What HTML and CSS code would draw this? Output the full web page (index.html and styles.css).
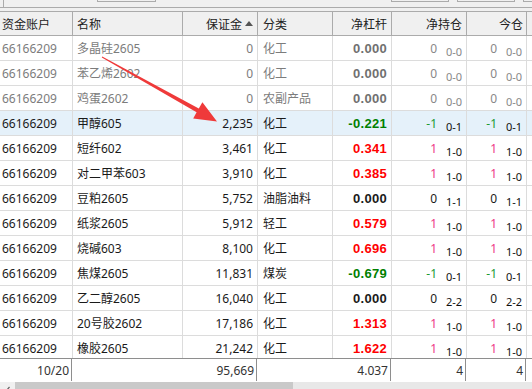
FILE: index.html
```html
<!DOCTYPE html>
<html>
<head>
<meta charset="utf-8">
<link rel="stylesheet" href="styles.css">
</head>
<body>
<div class="app">
  <div class="toolbar">
    <span class="tick"></span>
    <span class="tb b1"></span>
    <span class="tb b2"></span>
    <span class="tb b3"></span>
    <span class="tb b4"></span>
  </div>

  <div class="grid head">
    <div class="c first">资金账户</div>
    <div class="c">名称</div>
    <div class="c r">保证金<svg class="sort" width="8" height="5" viewBox="0 0 8 5"><path d="M0 5 L4 0 L8 5 Z" fill="#555"/></svg></div>
    <div class="c cat">分类</div>
    <div class="c r">净杠杆</div>
    <div class="c r">净持仓</div>
    <div class="c r last3">今仓</div>
    <div class="c end"></div>
  </div>

  <div class="rows">
    <div class="grid row dim">
      <div class="c first">66166209</div><div class="c">多晶硅2605</div><div class="c r">0</div><div class="c cat">化工</div>
      <div class="c r lev">0.000</div>
      <div class="c p"><span class="n">0</span><span class="s">0-0</span></div>
      <div class="c p"><span class="n">0</span><span class="s">0-0</span></div><div class="c end"></div>
    </div>
    <div class="grid row dim">
      <div class="c first">66166209</div><div class="c">苯乙烯2602</div><div class="c r">0</div><div class="c cat">化工</div>
      <div class="c r lev">0.000</div>
      <div class="c p"><span class="n">0</span><span class="s">0-0</span></div>
      <div class="c p"><span class="n">0</span><span class="s">0-0</span></div><div class="c end"></div>
    </div>
    <div class="grid row dim">
      <div class="c first">66166209</div><div class="c">鸡蛋2602</div><div class="c r">0</div><div class="c cat">农副产品</div>
      <div class="c r lev">0.000</div>
      <div class="c p"><span class="n">0</span><span class="s">0-0</span></div>
      <div class="c p"><span class="n">0</span><span class="s">0-0</span></div><div class="c end"></div>
    </div>
    <div class="grid row sel">
      <div class="c first">66166209</div><div class="c">甲醇605</div><div class="c r">2,235</div><div class="c cat">化工</div>
      <div class="c r lev dn">-0.221</div>
      <div class="c p"><span class="n dn1">-1</span><span class="s">0-1</span></div>
      <div class="c p"><span class="n dn1">-1</span><span class="s">0-1</span></div><div class="c end"></div>
    </div>
    <div class="grid row">
      <div class="c first">66166209</div><div class="c">短纤602</div><div class="c r">3,461</div><div class="c cat">化工</div>
      <div class="c r lev up">0.341</div>
      <div class="c p"><span class="n up1">1</span><span class="s">1-0</span></div>
      <div class="c p"><span class="n up1">1</span><span class="s">1-0</span></div><div class="c end"></div>
    </div>
    <div class="grid row">
      <div class="c first">66166209</div><div class="c">对二甲苯603</div><div class="c r">3,910</div><div class="c cat">化工</div>
      <div class="c r lev up">0.385</div>
      <div class="c p"><span class="n up1">1</span><span class="s">1-0</span></div>
      <div class="c p"><span class="n up1">1</span><span class="s">1-0</span></div><div class="c end"></div>
    </div>
    <div class="grid row">
      <div class="c first">66166209</div><div class="c">豆粕2605</div><div class="c r">5,752</div><div class="c cat">油脂油料</div>
      <div class="c r lev">0.000</div>
      <div class="c p"><span class="n">0</span><span class="s">1-1</span></div>
      <div class="c p"><span class="n">0</span><span class="s">1-1</span></div><div class="c end"></div>
    </div>
    <div class="grid row">
      <div class="c first">66166209</div><div class="c">纸浆2605</div><div class="c r">5,912</div><div class="c cat">轻工</div>
      <div class="c r lev up">0.579</div>
      <div class="c p"><span class="n up1">1</span><span class="s">1-0</span></div>
      <div class="c p"><span class="n up1">1</span><span class="s">1-0</span></div><div class="c end"></div>
    </div>
    <div class="grid row">
      <div class="c first">66166209</div><div class="c">烧碱603</div><div class="c r">8,100</div><div class="c cat">化工</div>
      <div class="c r lev up">0.696</div>
      <div class="c p"><span class="n up1">1</span><span class="s">1-0</span></div>
      <div class="c p"><span class="n up1">1</span><span class="s">1-0</span></div><div class="c end"></div>
    </div>
    <div class="grid row">
      <div class="c first">66166209</div><div class="c">焦煤2605</div><div class="c r">11,831</div><div class="c cat">煤炭</div>
      <div class="c r lev dn">-0.679</div>
      <div class="c p"><span class="n dn1">-1</span><span class="s">0-1</span></div>
      <div class="c p"><span class="n dn1">-1</span><span class="s">0-1</span></div><div class="c end"></div>
    </div>
    <div class="grid row">
      <div class="c first">66166209</div><div class="c">乙二醇2605</div><div class="c r">16,040</div><div class="c cat">化工</div>
      <div class="c r lev">0.000</div>
      <div class="c p"><span class="n">0</span><span class="s">2-2</span></div>
      <div class="c p"><span class="n">0</span><span class="s">2-2</span></div><div class="c end"></div>
    </div>
    <div class="grid row">
      <div class="c first">66166209</div><div class="c">20号胶2602</div><div class="c r">17,186</div><div class="c cat">化工</div>
      <div class="c r lev up">1.313</div>
      <div class="c p"><span class="n up1">1</span><span class="s">1-0</span></div>
      <div class="c p"><span class="n up1">1</span><span class="s">1-0</span></div><div class="c end"></div>
    </div>
    <div class="grid row">
      <div class="c first">66166209</div><div class="c">橡胶2605</div><div class="c r">21,242</div><div class="c cat">化工</div>
      <div class="c r lev up">1.622</div>
      <div class="c p"><span class="n up1">1</span><span class="s">1-0</span></div>
      <div class="c p"><span class="n up1">1</span><span class="s">1-0</span></div><div class="c end"></div>
    </div>
  </div>

  <div class="foot">
    <div class="f">10/20</div>
    <div class="f">95,669</div>
    <div class="f">4.037</div>
    <div class="f">4</div>
    <div class="f">4</div>
    <div class="f end"></div>
  </div>

  <div class="hscroll">
    <span class="larr"><svg width="6" height="9" viewBox="0 0 6 9"><path d="M4.5 1 L1.5 4.5 L4.5 8" fill="none" stroke="#606060" stroke-width="1.2"/></svg></span>
    <span class="thumb"></span>
  </div>

  <svg class="arrow" width="532" height="389" viewBox="0 0 532 389">
    <polygon points="101.8,57.4 196.6,112.2 193.2,118.6 217,121.5 202.4,102.2 198.8,108.4 102.2,56.6" fill="#ef3a3a"/>
  </svg>
</div>
</body>
</html>
```

FILE: styles.css
```css
html, body {
  margin: 0;
  padding: 0;
  background: #f0f0f0;
  overflow: hidden;
}

body {
  font-family: "Noto Sans", "Noto Sans CJK SC", sans-serif;
  font-size: 12px;
  color: #1a1a1a;
}

.app {
  position: relative;
  width: 532px;
  height: 389px;
  overflow: hidden;
}

/* toolbar remnants */
.toolbar {
  height: 7px;
  border-bottom: 1px solid #ababab;
  margin-bottom: 3px;
  display: flex;
  align-items: flex-start;
}
.tick {
  flex-shrink: 0;
  width: 1px;
  height: 7px;
  margin-left: 3px;
  background: #ababab;
}
.tb {
  flex-shrink: 0;
  height: 2px;
  box-sizing: border-box;
  border: 1px solid #ababab;
  border-top: 0;
}
.b1 { margin-left: 93px; width: 59px; }
.b2 { margin-left: 235px; width: 58px; }
.b3 { margin-left: 8px; width: 58px; }
.b4 { margin-left: 8px; width: 20px; }

/* grid */
.grid {
  display: grid;
  grid-template-columns: 73px 110px 75px 75px 59px 75px 60px 1fr;
}

.c {
  display: flex;
  align-items: center;
  min-width: 0;
  overflow: hidden;
  white-space: nowrap;
  padding: 0 4px;
  border-right: 1px solid #dcdcdc;
}
.c.first { padding-left: 2px; }
.c.r { justify-content: flex-end; }
.c.cat { padding-left: 5px; }
.c.last3 { padding-right: 3px; }
.c.end { border-right: 0; padding: 0; }

.head {
  height: 25px;
  box-sizing: border-box;
  border-top: 1px solid #ababab;
  border-bottom: 1px solid #ababab;
  background: #f0f0f0;
  color: #222;
}
.head .c { border-right-color: #ababab; }
.head .c.end { border-right: 0; }
.sort { margin-left: 3px; margin-bottom: 1px; }

.rows {
  height: 322px;
  overflow: hidden;
  background: #fff;
}

.row {
  height: 25px;
  box-sizing: border-box;
  border-bottom: 1px solid #dcdcdc;
  background: #fff;
}
.row.sel { background: #e5f1fa; }
.row.dim { color: #7c7c7c; }

.lev {
  font-family: "Liberation Sans", Arial, sans-serif;
  font-weight: bold;
  font-size: 13px;
  letter-spacing: 0.3px;
}
.dim .lev { color: #707070; }
.lev.up { color: #ff0000; }
.lev.dn { color: #008000; }

.p {
  justify-content: flex-end;
  padding-right: 2px;
}
.n { margin-top: 1px; }
.s {
  width: 18px;
  margin-left: 9px;
  margin-top: 6px;
  font-size: 11px;
  color: #111;
}
.dim .s { color: #888; }
.dim .n { color: #888; }
.up1 { color: #ee3a86; }
.dn1 { color: #229933; }

/* footer */
.foot {
  display: grid;
  grid-template-columns: 72px 185px 134px 75px 60px 1fr;
  height: 24px;
  box-sizing: border-box;
  border-top: 1px solid #8e8e8e;
  background: #fff;
  color: #333;
}
.f {
  display: flex;
  align-items: center;
  justify-content: flex-end;
  padding: 0 2px;
  border-right: 1px solid #8e8e8e;
  margin-bottom: 1px;
}
.f.end { border-right: 0; }

/* horizontal scrollbar */
.hscroll {
  height: 17px;
  display: flex;
  background: #e8e8e8;
}
.larr {
  width: 15px;
  background: #f0f0f0;
  display: flex;
  align-items: center;
  justify-content: center;
}
.thumb {
  width: 278px;
  background: #c9c9c9;
}

.arrow {
  position: absolute;
  left: 0;
  top: 0;
  pointer-events: none;
}
```
